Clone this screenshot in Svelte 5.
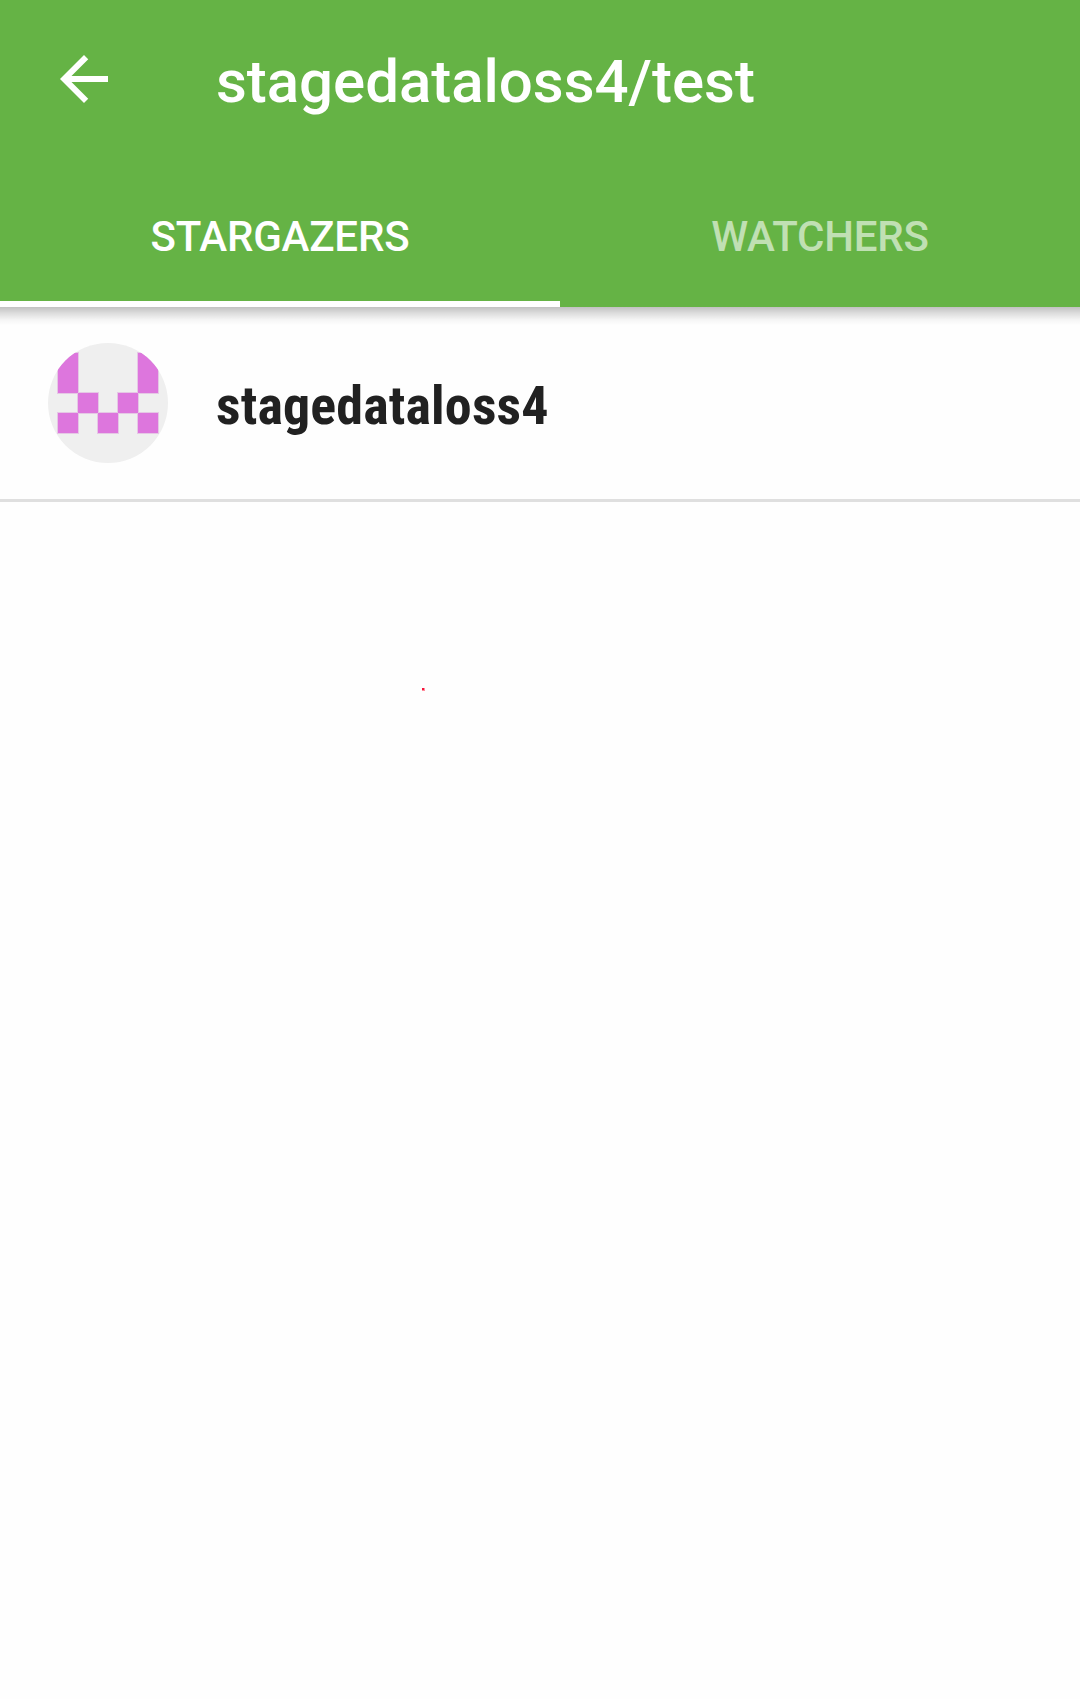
<script>
  const tabs = ['Stargazers', 'Watchers'];
  // Identicon cells: column, row, height in cells
  const blocks = [[0,0,2],[4,0,2],[1,2,1],[3,2,1],[0,3,1],[2,3,1],[4,3,1]];
</script>

<div class="screen">
  <header>
    <div class="toolbar">
      <svg class="back" viewBox="0 0 24 24"><path d="M20 11H7.83l5.59-5.59L12 4l-8 8 8 8 1.41-1.41L7.83 13H20v-2z" /></svg>
      <h1>stagedataloss4/test</h1>
    </div>
    <nav>
      {#each tabs as tab, i}
        <button class:active={i === 0}>{tab}</button>
      {/each}
    </nav>
  </header>
  <main>
    <div class="row">
      <svg class="avatar" viewBox="0 0 120 120">
        <defs><clipPath id="round"><circle cx="60" cy="60" r="60" /></clipPath></defs>
        <g clip-path="url(#round)">
          <rect width="120" height="120" fill="#efefef" />
          {#each blocks as [x, y, h]}
            <rect x={9 + x * 20} y={9 + y * 20} width="22" height={h * 20 + 2} fill="#e5c8e5" />
          {/each}
          {#each blocks as [x, y, h]}
            <rect x={10 + x * 20} y={10 + y * 20} width="20" height={h * 20} fill="#dd76dd" />
          {/each}
        </g>
      </svg>
      <span class="name">stagedataloss4</span>
    </div>
    <i class="dot"></i>
  </main>
</div>

<style>
  :global(body) { margin: 0; background: #fefefe; }
  .screen { width: 1080px; height: 1699px; overflow: hidden; background: #fefefe; font-family: Roboto, sans-serif; }
  header { position: relative; height: 307px; background: #65b345; color: #fff; }
  header::after { content: ""; position: absolute; top: 100%; left: 0; right: 0; height: 18px; background: linear-gradient(rgba(0,0,0,.24), rgba(0,0,0,.13) 35%, rgba(0,0,0,.04) 70%, transparent); }
  .toolbar { height: 163px; display: flex; align-items: center; }
  .back { width: 72px; height: 72px; margin-left: 48px; margin-top: -5px; fill: #fff; }
  h1 { margin: 0 0 0 96px; font-size: 60px; font-weight: 500; line-height: 70px; letter-spacing: -.03px; }
  nav { display: grid; grid-template-columns: 560px 520px; height: 144px; }
  button { border: 0; border-bottom: 6px solid transparent; padding: 8px 0 0; background: none; color: rgba(255,255,255,.6); font: 500 42px Roboto, sans-serif; letter-spacing: -.2px; text-transform: uppercase; }
  .active { color: #fff; border-color: #fff; }
  .row { height: 192px; display: flex; align-items: center; border-bottom: 3px solid #dfdfdf; }
  .avatar { width: 120px; height: 120px; margin-left: 48px; }
  .name { margin-left: 48px; padding-top: 4px; font: 700 54px "Roboto Condensed", Roboto, sans-serif; letter-spacing: .15px; color: #212121; }
  .dot { display: block; box-sizing: border-box; width: 3px; height: 3px; margin: 186px 0 0 422px; background: #f5143c; border: solid #ff8c9c; border-width: 0 1px 1px 0; }
</style>
